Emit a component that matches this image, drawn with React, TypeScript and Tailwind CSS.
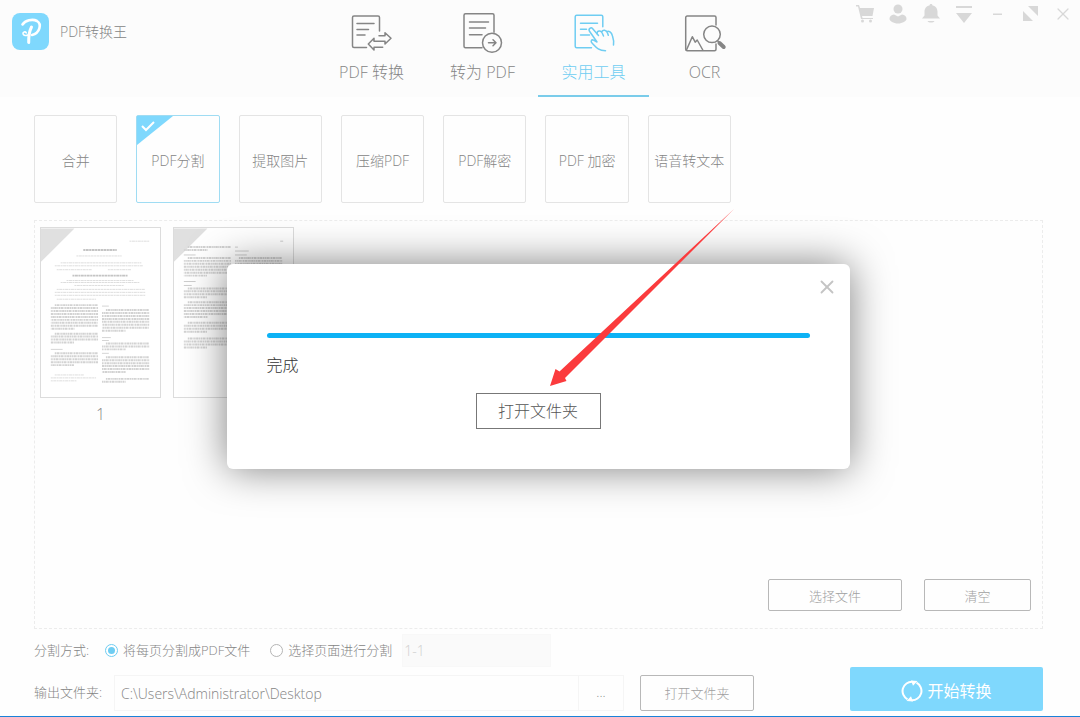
import React, { useState } from 'react';
import { X } from 'lucide-react';

const TOOLS = ['合并', 'PDF分割', '提取图片', '压缩PDF', 'PDF解密', 'PDF 加密', '语音转文本'];

interface LineBlock {
  x: number;
  y: number;
  width: number;
  rows: number;
}

const FIRST_PAGE: LineBlock[] = [
  { x: 10, y: 78, width: 48, rows: 9 },
  { x: 10, y: 107, width: 48, rows: 4 },
  { x: 10, y: 127, width: 48, rows: 5 },
  { x: 62, y: 83, width: 48, rows: 8 },
  { x: 62, y: 117, width: 48, rows: 3 },
  { x: 62, y: 131, width: 48, rows: 6 },
  { x: 62, y: 153, width: 48, rows: 2 },
];

const SECOND_PAGE: LineBlock[] = [
  { x: 10, y: 19, width: 48, rows: 2 },
  { x: 10, y: 30, width: 48, rows: 7 },
  { x: 10, y: 61, width: 48, rows: 4 },
  { x: 10, y: 75, width: 48, rows: 6 },
  { x: 10, y: 96, width: 48, rows: 4 },
  { x: 10, y: 112, width: 48, rows: 4 },
  { x: 62, y: 30, width: 48, rows: 12 },
];

const CartIcon = () => (
  <svg viewBox="0 0 20 20" className="size-5" fill="currentColor">
    <path d="M1 1h3l1 3h14l-1.500 8H7l.500 2H18v1H6L3 2.500H1z" />
    <circle cx="7.500" cy="17" r="1.500" />
    <circle cx="15.500" cy="17" r="1.500" />
  </svg>
);

const UserIcon = () => (
  <svg viewBox="0 0 20 20" className="size-5" fill="currentColor">
    <circle cx="10" cy="5" r="4.500" />
    <path d="M6 10.500l4 2 4-2c3 .5 4.500 2 4.500 4.500 0 2-4 4.500-8.500 4.500S1.500 17 1.500 15c0-2.500 1.500-4 4.500-4.500z" />
  </svg>
);

const BellIcon = () => (
  <svg viewBox="0 0 20 20" className="size-5" fill="currentColor">
    <path d="M10 0c1 0 1.500.7 1.500 1.600C15 2.300 16.500 5 16.500 8v3.500l2.500 3H1l2.500-3V8c0-3 1.500-5.700 5-6.400C8.500.7 9 0 10 0zM6.500 17h7c-1 2-6 2-7 0z" />
  </svg>
);

const MenuIcon = () => (
  <svg viewBox="0 0 20 20" className="size-5" fill="currentColor">
    <path d="M2 2h16v2H2zM2 9h16l-8 10z" />
  </svg>
);

const MinimizeIcon = () => (
  <svg viewBox="0 0 20 20" className="size-5" fill="currentColor">
    <path d="M6 9.500h9v1.500H6z" />
  </svg>
);

const RestoreIcon = () => (
  <svg viewBox="0 0 20 20" className="size-5" fill="currentColor">
    <path d="M8 2h10v10zM3 7v10h10z" />
  </svg>
);

const WINDOW_ACTIONS = [
  { label: '购物车', icon: <CartIcon /> },
  { label: '账户', icon: <UserIcon /> },
  { label: '通知', icon: <BellIcon /> },
  { label: '菜单', icon: <MenuIcon /> },
  { label: '最小化', icon: <MinimizeIcon /> },
  { label: '还原', icon: <RestoreIcon /> },
  { label: '关闭', icon: <X size={20} strokeWidth={1.500} /> },
];

const TabIcon: React.FC<{ children: React.ReactNode }> = ({ children }) => (
  <svg
    viewBox="0 0 48 42"
    className="h-[42px] w-12"
    fill="none"
    stroke="currentColor"
    strokeWidth="1.500"
    strokeLinecap="round"
    strokeLinejoin="round"
  >
    {children}
  </svg>
);

const TABS = [
  {
    label: 'PDF 转换',
    icon: (
      <TabIcon>
        <path d="M18.500 35.500H6a1.500 1.500 0 0 1-1.500-1.500V5.500A1.500 1.500 0 0 1 6 4h24a1.500 1.500 0 0 1 1.500 1.500V19" />
        <path d="M9 11.500h17M9 17.500h11.500M9 23h8" />
        <path d="M31 23.700h6v-3l6 5.600-6 5.700v-2.700H26v-3L20.300 32l5.700 6v-2.700h8.700" />
      </TabIcon>
    ),
  },
  {
    label: '转为 PDF',
    icon: (
      <TabIcon>
        <path d="M23 35.700H6.500A1.500 1.500 0 0 1 5 34.200V3.200a1.500 1.500 0 0 1 1.500-1.500h27A1.500 1.500 0 0 1 35 3.200v17" />
        <path d="M10.500 10h19M10.500 16h16M10.500 22.700h12.500" />
        <circle cx="33" cy="30.700" r="9.500" />
        <path d="M29.500 30.700h7M34 27.700l3 3-3 3" />
      </TabIcon>
    ),
  },
  {
    label: '实用工具',
    icon: (
      <TabIcon>
        <path d="M21.500 35.700H6.700a1.500 1.500 0 0 1-1.500-1.500V4.800a1.500 1.500 0 0 1 1.500-1.500h24.600a1.500 1.500 0 0 1 1.500 1.500v10" />
        <path d="M10.500 11.300h17M10.500 17.300h6M10.500 23h9" />
        <path d="M28.500 23.500l-6-7c-1.500-1.700-4.500.5-3 2.800L27 30l-3.500-1.800c-2-1-3.200 1-1.500 2.800 4 4.200 6.500 7.700 13.500 7.700" />
        <path d="M27 21.700c0-3.200 4-3.700 5.200-.7l1.300 3M31.800 20c1-2.800 4.600-2 5.600.8l.9 2.400M36.800 19.700c2-1.200 4.700.5 5.700 4.300 1 3 1.500 6 1 9" />
      </TabIcon>
    ),
  },
  {
    label: 'OCR',
    icon: (
      <TabIcon>
        <path d="M35 13V5.500A1.500 1.500 0 0 0 33.500 4H6.200a1.500 1.500 0 0 0-1.500 1.500v31.700a1.500 1.500 0 0 0 1.500 1.500h27.300a1.500 1.500 0 0 0 1.500-1.500V32" />
        <path d="M5.700 37.500l5.600-12.800 2.900 5.500 2-2.200 5.600 10" />
        <circle cx="31" cy="22.300" r="8.300" />
        <path d="M36.500 28.700l2 2" />
        <path d="M38.500 31l4.200 4" strokeWidth="4" />
      </TabIcon>
    ),
  },
];

const Logo = () => (
  <svg viewBox="0 0 37 37" className="size-[37px]" fill="none">
    <rect width="37" height="37" rx="8" fill="#7fd8fd" />
    <g stroke="#fff" strokeLinecap="round" strokeLinejoin="round">
      <path d="M10.500 11.500C13 7.500 20.500 5.500 25 8c5 3 3 12-5 14" strokeWidth="2.600" />
      <path d="M19.500 14c-2 4-3 8.500-2.800 15.500" strokeWidth="3" />
      <path d="M16 22c-1.800 1-4.500.6-5-1.200-.3-2 2.300-2.600 3.300-1" strokeWidth="1.600" />
    </g>
  </svg>
);

const LineBlocks: React.FC<{ blocks: LineBlock[] }> = ({ blocks }) => (
  <g stroke="#d2d2d2" strokeWidth="2" strokeDasharray="1.500 .5 2.500 .5 1 .5">
    {blocks.map((block) =>
      Array.from({ length: block.rows }, (_, i) => {
        const left = i === 0 ? block.x + 4 : block.x;
        const right = i === block.rows - 1 ? block.x + block.width / 2 : block.x + block.width;
        const y = block.y + i * 3;
        return <line key={`${block.x}-${y}`} x1={left} x2={right} y1={y} y2={y} strokeDashoffset={i * 5} />;
      })
    )}
  </g>
);

interface PageThumbProps {
  page: number;
  blocks: LineBlock[];
  children?: React.ReactNode;
}

const PageThumb: React.FC<PageThumbProps> = ({ page, blocks, children }) => (
  <figure className="flex flex-col items-center gap-1">
    <svg viewBox="0 0 121 171" className="h-[171px] w-[121px] border border-[#dcdcdc] bg-white" fill="none">
      <path d="M0 0h34L0 34z" fill="#e0e0e0" />
      {children}
      <LineBlocks blocks={blocks} />
    </svg>
    <figcaption className="text-base leading-6">{page}</figcaption>
  </figure>
);

const App: React.FC = () => {
  const [activeTab, setActiveTab] = useState('实用工具');
  const [activeTool, setActiveTool] = useState('PDF分割');
  const [splitMode, setSplitMode] = useState('each');
  const [range, setRange] = useState('1-1');
  const [folder, setFolder] = useState('C:\\Users\\Administrator\\Desktop');
  const [dialogOpen, setDialogOpen] = useState(true);

  const radioClass =
    "grid size-[13px] appearance-none place-items-center rounded-full border border-[#b5b5b5] bg-white checked:border-[#6fcdf2] checked:before:size-[7px] checked:before:rounded-full checked:before:bg-[#6fcdf2] checked:before:content-['']";

  return (
    <div className="relative flex min-h-screen flex-col border-b border-[#1a82d8] bg-[#fefefe] font-['Open_Sans','Noto_Sans_CJK_SC',sans-serif] text-[13px] font-light text-[#858585]">
      {/* Header */}
      <header className="grid grid-cols-[1fr_auto_1fr] bg-[#fcfcfc]">
        <div className="flex items-start gap-[11px] pt-[13px] pl-3">
          <Logo />
          <h1 className="text-sm leading-[37px]">PDF转换王</h1>
        </div>
        <nav className="flex pr-1">
          {TABS.map((tab) => (
            <button
              key={tab.label}
              onClick={() => setActiveTab(tab.label)}
              className={`flex h-[97px] w-[111px] flex-col items-center gap-1.5 border-b-2 pt-3 text-base leading-6 ${
                activeTab === tab.label ? 'border-[#7accea] text-[#6fcdf2]' : 'border-transparent'
              }`}
            >
              {tab.icon}
              {tab.label}
            </button>
          ))}
        </nav>
        <div className="flex items-start justify-end gap-[13px] pt-1 pr-[7px] text-[#d8d8d8]">
          {WINDOW_ACTIONS.map((action) => (
            <button key={action.label} aria-label={action.label}>
              {action.icon}
            </button>
          ))}
        </div>
      </header>

      <main className="flex flex-1 flex-col pt-[18px] pr-[37px] pl-[34px]">
        {/* Tool cards */}
        <div className="grid w-[697px] max-w-full grid-cols-7 gap-[19px]">
          {TOOLS.map((tool) => (
            <button
              key={tool}
              onClick={() => setActiveTool(tool)}
              className={`relative h-[88px] rounded-xs border pt-1 text-sm whitespace-nowrap ${
                activeTool === tool ? 'border-[#9fdcf3]' : 'border-[#e4e4e4]'
              }`}
            >
              {activeTool === tool && (
                <svg viewBox="0 0 36 30" className="absolute top-0 left-0 h-[30px] w-9" fill="none">
                  <path d="M0 0h36L0 29z" fill="#7fd8fd" />
                  <path d="M5 10l4 4 8-8" stroke="#fff" strokeWidth="2" />
                </svg>
              )}
              {tool}
            </button>
          ))}
        </div>

        {/* Page list */}
        <section className="mt-[17px] flex flex-1 flex-col justify-between border border-dashed border-[#ececec] pt-1.5 pr-[11px] pb-[17px] pl-[5px]">
          <div className="flex gap-3">
            <PageThumb page={1} blocks={FIRST_PAGE}>
              <g stroke="#dcdcdc" strokeDasharray="2 .5 3 .5">
                <path d="M90 13h20M36 28h46M20 35h82M14 38h90M16 42h36M68 42h24M26 53h68M20 55h80M34 58h50M16 62h90M14 65h92M14 68h92M16 72h40M14 149h30M10 152h46M10 155h26" />
                <path d="M43 22h34M32 48h56" stroke="#c4c4c4" strokeWidth="2" />
              </g>
              <path d="M62 79h7M62 111h9M62 114h7M10 123h12M62 127h7" stroke="#d4d4d4" />
            </PageThumb>
            <PageThumb page={2} blocks={SECOND_PAGE}>
              <path d="M108 13h3M10 27h12M10 54h12M10 58h8M62 19h3M62 23h14M62 27h12" stroke="#ccc" />
            </PageThumb>
          </div>
          <div className="flex justify-end gap-[22px] text-[#a0a0a0]">
            <button className="h-8 w-[134px] rounded-xs border border-[#b8b8b8] pt-1">选择文件</button>
            <button className="h-8 w-[107px] rounded-xs border border-[#b8b8b8] pt-1">清空</button>
          </div>
        </section>
      </main>

      {/* Output options */}
      <footer className="flex items-end justify-between pt-[5px] pr-[37px] pb-[5px] pl-[34px]">
        <div className="flex flex-col gap-2">
          <div className="flex items-center">
            <span className="w-[71px]">分割方式:</span>
            <label className="flex items-center gap-[5px]">
              <input
                type="radio"
                name="split"
                className={radioClass}
                checked={splitMode === 'each'}
                onChange={() => setSplitMode('each')}
              />
              将每页分割成PDF文件
            </label>
            <label className="ml-5 flex items-center gap-[5px]">
              <input
                type="radio"
                name="split"
                className={radioClass}
                checked={splitMode === 'range'}
                onChange={() => setSplitMode('range')}
              />
              选择页面进行分割
            </label>
            <input
              aria-label="页面范围"
              value={range}
              onChange={(e) => setRange(e.target.value)}
              className="ml-2.5 h-[33px] w-[149px] border border-[#f8f8f8] bg-[#fafafa] px-px text-sm text-[#cfcfcf]"
            />
          </div>
          <div className="flex items-center">
            <label htmlFor="folder" className="w-20">
              输出文件夹:
            </label>
            <input
              id="folder"
              value={folder}
              onChange={(e) => setFolder(e.target.value)}
              className="h-9 w-[465px] border border-[#f5f5f5] px-1.5 text-sm"
            />
            <button className="h-9 w-[45px] border border-l-0 border-[#f5f5f5]">...</button>
            <button className="ml-4 h-9 w-[114px] rounded-xs border border-[#b8b8b8] pt-0.5 text-[#a0a0a0]">
              打开文件夹
            </button>
          </div>
        </div>
        <button className="flex h-11 w-[193px] items-center justify-center gap-1 rounded-xs bg-[#7fd8fd] pt-1 text-base font-normal text-white">
          <svg viewBox="0 0 22 22" className="size-[22px]" fill="none" stroke="currentColor" strokeWidth="2">
            <path d="M6.500 19.300A9.300 9.300 0 0 1 11.500 1.800M15.500 2.700A9.300 9.300 0 0 1 10.500 20.200" />
            <path d="M10 .5l6.500.5-4.500 4.800zM12 21.500l-6.500-.5 4.500-4.800z" fill="currentColor" stroke="none" />
          </svg>
          开始转换
        </button>
      </footer>

      {/* Finished dialog */}
      {dialogOpen && (
        <div
          role="dialog"
          aria-label="完成"
          className="absolute top-[264px] right-1 left-0 mx-auto flex w-[623px] flex-col rounded-md bg-white px-10 pt-3 pb-10 text-base text-[#333] shadow-[0_0_40px_rgba(0,0,0,0.5)]"
        >
          <button
            aria-label="关闭"
            onClick={() => setDialogOpen(false)}
            className="-mr-7 self-end text-[#c4c4c4]"
          >
            <X size={22} strokeWidth={2} />
          </button>
          <div role="progressbar" aria-valuenow={100} className="mt-[35px] h-[5px] rounded-full bg-[#0db2f5]" />
          <p className="mt-[15px] leading-6">完成</p>
          <button className="mt-4 h-9 w-[125px] self-center border border-[#777] text-[#555]">打开文件夹</button>
          <svg
            viewBox="0 0 184 178"
            className="pointer-events-none absolute -top-[55px] left-[323px] h-[178px] w-[184px]"
            fill="#fb3b3d"
          >
            <path d="M0 177l5.500-17 4 2.500L184 0 15 169l1.500 3z" />
          </svg>
        </div>
      )}
    </div>
  );
};

export default App;
